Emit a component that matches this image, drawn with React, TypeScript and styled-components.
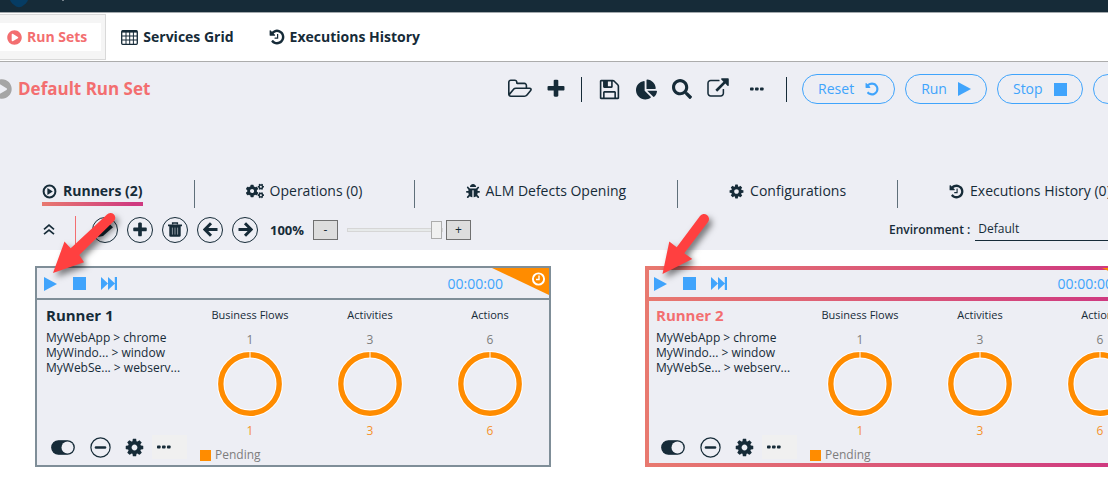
import React from "react";
import styled, { createGlobalStyle, css } from "styled-components";
import { FaBug, FaChartPie, FaCogs, FaPlayCircle, FaSearch } from "react-icons/fa";

const ink = "#162b38";
const blue = "#40a4fc";
const coral = "#f36e70";
const orange = "#ff8c00";
const panel = "#edeef4";
const sunset = "linear-gradient(90deg, #e8796f 0%, #cf3a80 90%)";

const GlobalStyle = createGlobalStyle`
  * { box-sizing: border-box; }
  body {
    margin: 0;
    background: #fff;
    color: ${ink};
    font: 14px/20px "Open Sans", "Noto Sans", sans-serif;
    overflow: hidden;
  }
  button, select, input { font: inherit; color: inherit; margin: 0; }
  svg { display: block; flex: none; }
`;

/* ---------- icons ---------- */

const glyphs = {
  undo: "M1664 896q0 156-61 298t-164 245-245 164-298 61q-172 0-327-72.5t-264-204.5q-7-10-6.5-22.5t8.5-20.5l137-138q10-9 25-9 16 2 23 12 73 95 179 147t225 52q104 0 198.5-40.5t163.5-109.5 109.5-163.5 40.5-198.5-40.5-198.5-109.5-163.5-163.5-109.5-198.5-40.5q-98 0-188 35.5t-160 101.5l137 138q31 30 14 69-17 40-59 40h-448q-26 0-45-19t-19-45v-448q0-42 40-59 39-17 69 14l130 129q107-101 244.5-156.5t284.5-55.5q156 0 298 61t245 164 164 245 61 298z",
  hands: "M1024 608v448q0 14-9 23t-23 9h-320q-14 0-23-9t-9-23v-64q0-14 9-23t23-9h224v-352q0-14 9-23t23-9h64q14 0 23 9t9 23z",
  external: "M1408 928v320q0 119-84.5 203.5t-203.5 84.5h-832q-119 0-203.5-84.5t-84.5-203.5v-832q0-119 84.5-203.5t203.5-84.5h704q14 0 23 9t9 23v64q0 14-9 23t-23 9h-704q-66 0-113 47t-47 113v832q0 66 47 113t113 47h832q66 0 113-47t47-113v-320q0-14 9-23t23-9h64q14 0 23 9t9 23zm384-864v512q0 26-19 45t-45 19-45-19l-176-176-652 652q-10 10-23 10t-23-10l-114-114q-10-10-10-23t10-23l652-652-176-176q-19-19-19-45t19-45 45-19h512q26 0 45 19t19 45z",
  plus: "M1600 736v192q0 40-28 68t-68 28h-416v416q0 40-28 68t-68 28h-192q-40 0-68-28t-28-68v-416h-416q-40 0-68-28t-28-68v-192q0-40 28-68t68-28h416v-416q0-40 28-68t68-28h192q40 0 68 28t28 68v416h416q40 0 68 28t28 68z",
  floppy: "M512 1536h768v-384h-768v384zm896 0h128v-896q0-14-10-38.5t-20-34.5l-281-281q-10-10-34-20t-39-10v416q0 40-28 68t-68 28h-576q-40 0-68-28t-28-68v-416h-128v1280h128v-416q0-40 28-68t68-28h832q40 0 68 28t28 68v416zm-384-928v-320q0-13-9.5-22.5t-22.5-9.5h-192q-13 0-22.5 9.5t-9.5 22.5v320q0 13 9.5 22.5t22.5 9.5h192q13 0 22.5-9.5t9.5-22.5zm640 32v928q0 40-28 68t-68 28h-1344q-40 0-68-28t-28-68v-1344q0-40 28-68t68-28h928q40 0 88 20t76 48l280 280q28 28 48 76t20 88z",
  folder: "M1717 931q0-35-53-35h-1088q-40 0-85.5 21.5t-71.5 52.5l-294 363q-18 24-18 40 0 35 53 35h1088q40 0 86-22t71-53l294-363q18-22 18-39zm-1141-163h768v-160q0-40-28-68t-68-28h-576q-40 0-68-28t-28-68v-64q0-40-28-68t-68-28h-320q-40 0-68 28t-28 68v853l256-315q44-53 116-87.5t140-34.5zm1269 163q0 62-46 120l-295 363q-43 53-116 87.5t-140 34.5h-1088q-92 0-158-66t-66-158v-960q0-92 66-158t158-66h320q92 0 158 66t66 158v32h544q92 0 158 66t66 158v160h192q54 0 99 24.5t67 70.5q15 32 15 68z",
  cog: "M1152 896q0-106-75-181t-181-75-181 75-75 181 75 181 181 75 181-75 75-181zm512-109v222q0 12-8 23t-20 13l-185 28q-19 54-39 91 35 50 107 138 10 12 10 25t-9 23q-27 37-99 108t-94 71q-12 0-26-9l-138-108q-44 23-91 38-16 136-29 186-7 28-36 28h-222q-14 0-24.5-8.5t-11.5-21.5l-28-184q-49-16-90-37l-141 107q-10 9-25 9-14 0-25-11-126-114-165-168-7-10-7-23 0-12 8-23 15-21 51-66.5t54-70.5q-27-50-41-99l-183-27q-13-2-21-12.5t-8-23.5v-222q0-12 8-23t19-13l186-28q14-46 39-92-40-57-107-138-10-12-10-24 0-10 9-23 26-36 98.5-107.5t94.5-71.5q13 0 26 10l138 107q44-23 91-38 16-136 29-186 7-28 36-28h222q14 0 24.5 8.5t11.5 21.5l28 184q49 16 90 37l142-107q9-9 24-9 13 0 25 10 129 119 165 170 7 8 7 22 0 12-8 23-15 21-51 66.5t-54 70.5q26 50 41 98l183 28q13 2 21 12.5t8 23.5z",
};

const Glyph = ({ name, size }: { name: keyof typeof glyphs | "history"; size: number }) => (
  <svg width={size} height={size} viewBox={name === "folder" ? "-64 0 1920 1792" : "64 64 1664 1664"} fill="currentColor" overflow="visible">
    {name === "history" ? (
      <>
        <path d={glyphs.undo} />
        <path d={glyphs.hands} />
      </>
    ) : (
      <path d={glyphs[name]} />
    )}
  </svg>
);

const TableIcon = () => (
  <svg width="17" height="15" viewBox="0 0 17 15" fill="none" stroke="currentColor">
    <rect x="0.7" y="0.7" width="15.6" height="13.6" rx="1" strokeWidth="1.3" />
    <path d="M1 1.6h15" strokeWidth="2" />
    <path d="M1 6h15M1 10h15M5 2v12M8.7 2v12M12.4 2v12" strokeWidth="1" />
  </svg>
);
const PlayRing = () => (
  <svg width="15" height="15" viewBox="0 0 15 15">
    <circle cx="7.5" cy="7.5" r="5.9" fill="none" stroke="currentColor" strokeWidth="2" />
    <path d="M5.4 4.1l5.4 3.4-5.4 3.4z" fill="currentColor" />
  </svg>
);
const Dots = () => (
  <svg width="14" height="4" viewBox="0 0 14 4" fill="currentColor">
    <rect y="0.5" width="3.6" height="3" rx="0.8" />
    <rect x="5" y="0.5" width="3.6" height="3" rx="0.8" />
    <rect x="10" y="0.5" width="3.6" height="3" rx="0.8" />
  </svg>
);
const PlayIcon = () => (
  <svg width="13" height="14" viewBox="0 0 13 14" fill="currentColor"><path d="M0 0l13 7L0 14z" /></svg>
);
const StopIcon = () => (
  <svg width="13" height="13" viewBox="0 0 13 13" fill="currentColor"><path d="M0 0h13v13H0z" /></svg>
);
const ForwardIcon = () => (
  <svg width="16" height="13" viewBox="0 0 16 13" fill="currentColor">
    <path d="M0 0l7 6.5L0 13zM7 0l7 6.5L7 13zM13.8 0H16v13h-2.2z" />
  </svg>
);
const ChevronsUp = () => (
  <svg width="12" height="11" viewBox="0 0 12 11" fill="none" stroke="currentColor" strokeWidth="1.7">
    <path d="M1 5.4l5-4.2 5 4.2M1 10.2L6 6l5 4.2" />
  </svg>
);
const PencilIcon = () => (
  <svg width="18" height="18" viewBox="0 0 18 18" fill="currentColor">
    <path d="M2 16l1-5L12.600 2 17 6.200 7 15z" />
  </svg>
);
const TrashIcon = () => (
  <svg width="14" height="15" viewBox="0 0 14 15">
    <path d="M4.6 2.6V1h4.8v1.6" fill="none" stroke="currentColor" strokeWidth="1.4" />
    <path d="M0 2.4h14v1.8H0zM1.3 4h11.4v9.4q0 1.4-1.4 1.4H2.7q-1.4 0-1.4-1.4z" fill="currentColor" />
    <path d="M4.4 5.6v7M7 5.6v7M9.6 5.6v7" stroke="#9aa3ab" strokeWidth="0.9" />
  </svg>
);
const ArrowIcon = ({ flip }: { flip?: boolean }) => (
  <svg width="15" height="15" viewBox="0 0 15 15" fill="none" stroke="currentColor" strokeWidth="3">
    <path d={flip ? "M0.5 7.5h12.5M7 1.3l6.2 6.2L7 13.7" : "M14.5 7.5H2M8 1.3L1.8 7.5 8 13.7"} />
  </svg>
);
const ToggleIcon = () => (
  <svg width="24" height="15" viewBox="0 0 24 15">
    <rect x="0.8" y="0.8" width="22.4" height="13.4" rx="6.7" fill="currentColor" stroke="currentColor" strokeWidth="1.3" />
    <circle cx="16.5" cy="7.5" r="6" fill={panel} />
  </svg>
);
const MinusRing = () => (
  <svg width="21" height="21" viewBox="0 0 21 21" stroke="currentColor" fill="none">
    <circle cx="10.5" cy="10.5" r="9.6" strokeWidth="1.2" />
    <path d="M6 10.5h9" strokeWidth="2.6" strokeLinecap="round" />
  </svg>
);
const PendingCorner = () => (
  <svg width="57" height="27" viewBox="0 0 57 27">
    <path d="M0 0h57v27z" fill={orange} />
    <circle cx="46.5" cy="11" r="5.6" fill="none" stroke="#fff" strokeWidth="1.9" />
    <path d="M47 7.5v4h-3" fill="none" stroke="#fff" strokeWidth="1.4" />
  </svg>
);
const Ring = () => (
  <svg width="66" height="66" viewBox="0 0 66 66" fill="none">
    <circle cx="33" cy="33" r="29.2" stroke="#fff" strokeWidth="7.4" />
    <circle cx="33" cy="33" r="29.2" stroke={orange} strokeWidth="5.4" />
    <path d="M33 0.5v6.500" stroke="#fff" />
  </svg>
);

/* ---------- top navigation ---------- */

const TitleBar = styled.div`
  height: 13px;
  padding-left: 10px;
  display: flex;
  background: ${ink};
  border-bottom: 1px solid #a3a9ad;
`;
const Nav = styled.nav`
  display: flex;
  align-items: center;
  height: 49px;
  border-bottom: 1px solid #acacac;
  background: #fff;
`;
const NavLink = styled.a<{ $active?: boolean }>`
  display: flex;
  align-items: center;
  gap: 5px;
  color: ${ink};
  font-size: 14px;
  font-weight: 700;
  text-decoration: none;
  white-space: nowrap;
  margin-left: ${(p) => (p.$active ? 0 : 35)}px;
  ${(p) =>
    p.$active &&
    css`
      color: ${coral};
      height: 28px;
      padding: 0 14px 0 7px;
      background: #fff;
    `}
`;
const ActiveTab = styled.div`
  display: flex;
  align-items: center;
  height: 46px;
  padding-right: 4px;
  margin-right: -20px;
  background: #f5f5f5;
  border: 1px solid #d9d9d9;
  border-left: 0;
`;

/* ---------- run set header ---------- */

const RunSetPanel = styled.section`
  background: ${panel};
  overflow: hidden;
`;
const HeaderRow = styled.header`
  display: flex;
  align-items: center;
  height: 54px;
  margin: 0 -76px 64px -8px;
`;
const Title = styled.h1`
  flex: 1;
  display: flex;
  align-items: center;
  gap: 6px;
  margin: 0;
  color: ${coral};
  font-size: 17px;
  font-weight: 700;
  white-space: nowrap;
  svg { color: #a5a5a5; }
`;
const Tools = styled.div`
  display: flex;
  align-items: center;
  gap: 15px;
`;
const Separator = styled.span<{ $color?: string; $height: number }>`
  flex: none;
  width: 1px;
  height: ${(p) => p.$height}px;
  background: ${(p) => p.$color ?? ink};
`;
const IconButton = styled.button<{ $width?: number; $color?: string }>`
  flex: none;
  display: flex;
  align-items: center;
  justify-content: center;
  width: ${(p) => p.$width ?? 22}px;
  height: 24px;
  padding: 0;
  border: 0;
  background: none;
  color: ${(p) => p.$color ?? ink};
`;
const PillButton = styled.button`
  display: flex;
  align-items: center;
  gap: 11px;
  height: 30px;
  padding: 0 15px;
  border: 1px solid ${blue};
  border-radius: 15px;
  background: none;
  color: ${blue};
  white-space: nowrap;
`;
const Pills = styled.div`
  display: flex;
  gap: 10px;
`;

/* ---------- section tabs ---------- */

const Tabs = styled.nav`
  display: flex;
  align-items: center;
  height: 28px;
`;
const TabCell = styled.div`
  flex: none;
  display: flex;
  justify-content: center;
  padding: 0 51px;
  height: 28px;
  &:first-child { padding-left: 42px; }
  & + & { border-left: 1px solid #5f6f7a; }
`;
const Tab = styled.a<{ $active?: boolean }>`
  display: flex;
  align-items: center;
  gap: 6px;
  height: 26px;
  color: ${ink};
  text-decoration: none;
  white-space: nowrap;
  font-weight: ${(p) => (p.$active ? 700 : 400)};
  border-bottom: 4px solid transparent;
  border-image: ${(p) => (p.$active ? `${sunset} 1` : "none")};
`;

/* ---------- runner tool strip ---------- */

const Strip = styled.div`
  display: flex;
  align-items: center;
  height: 42px;
  padding: 6px 0 5px 38px;
`;
const StripRule = styled(Separator)`
  margin-left: 15px;
`;
const RoundGroup = styled.div`
  display: flex;
  gap: 9px;
  margin: 0 12px 0 16px;
`;
const RoundButton = styled.button`
  display: flex;
  align-items: center;
  justify-content: center;
  width: 26px;
  height: 26px;
  padding: 0;
  border: 1px solid ${ink};
  border-radius: 50%;
  background: none;
`;
const ZoomValue = styled.output`
  width: 43px;
  font-size: 13px;
  font-weight: 700;
`;
const StepButton = styled.button`
  width: 25px;
  height: 20px;
  padding: 0;
  border: 1px solid #707070;
  background: #dddddd;
  font-size: 12px;
  line-height: 16px;
`;
const ZoomSlider = styled.input`
  appearance: none;
  width: 96px;
  height: 18px;
  margin: 0 3px 0 9px;
  background: none;
  &::-webkit-slider-runnable-track {
    height: 4px;
    border: 1px solid #d6d6d6;
    background: #e7eaea;
  }
  &::-webkit-slider-thumb {
    appearance: none;
    width: 11px;
    height: 18px;
    margin-top: -8px;
    border: 1px solid #acacac;
    background: #f0f0f0;
  }
`;
const Environment = styled.div`
  display: flex;
  align-items: center;
  gap: 5px;
  width: 219px;
  margin-left: auto;
  font-size: 12px;
  label { flex: none; font-weight: 600; }
`;
const EnvironmentSelect = styled.select`
  flex: 1;
  appearance: none;
  height: 22px;
  padding: 0 3px;
  border: 0;
  border-bottom: 1px solid ${ink};
  border-radius: 0;
  background: none;
`;

/* ---------- runner cards ---------- */

const RunnerList = styled.main`
  display: flex;
  gap: 94px;
  padding: 16px 0 14px 35px;
  overflow: hidden;
`;
const Card = styled.article<{ $active?: boolean }>`
  position: relative;
  flex: none;
  width: 516px;
  border: 2px solid #7f8e98;
  padding: 2px;
  background: ${panel};
  ${(p) =>
    p.$active &&
    css`
      border: 4px solid transparent;
      padding: 0;
      background: linear-gradient(${panel}, ${panel}) padding-box, ${sunset} border-box;
    `}
`;
const CardBar = styled.div`
  display: flex;
  align-items: center;
  height: 27px;
  padding: 0 44px 0 5px;
  color: ${blue};
`;
const Timer = styled.time`
  margin-left: auto;
`;
const CardRule = styled.div<{ $active?: boolean }>`
  height: 4px;
  margin: 0 -2px;
  background: ${(p) => (p.$active ? sunset : "#7f8e98")};
  border: solid ${panel};
  border-width: ${(p) => (p.$active ? 0 : "1px 0")};
`;
const Corner = styled.div<{ $inset: number }>`
  position: absolute;
  top: ${(p) => p.$inset}px;
  right: ${(p) => p.$inset}px;
`;
const CardBody = styled.div`
  display: grid;
  grid-template-columns: minmax(0, 1fr) 360px;
  height: 162px;
  margin-right: -3px;
  padding-top: 4px;
`;
const Summary = styled.div`
  display: flex;
  flex-direction: column;
  padding-left: 7px;
`;
const RunnerName = styled.h2<{ $active?: boolean }>`
  margin: 0 0 5px;
  font-size: 15px;
  line-height: 20px;
  font-weight: 700;
  color: ${(p) => (p.$active ? coral : ink)};
`;
const Targets = styled.ul`
  margin: 0;
  padding: 0;
  list-style: none;
  font-size: 12px;
  line-height: 15px;
  white-space: nowrap;
`;
const CardActions = styled.div`
  display: flex;
  align-items: center;
  gap: 12px;
  margin-top: auto;
  padding: 0 0 6px 3px;
`;
const MoreButton = styled(IconButton)`
  justify-content: flex-start;
  margin-left: -5px;
  padding-left: 5px;
  background: #f0f0f0;
`;
const Charts = styled.div`
  display: grid;
  grid-template-columns: repeat(3, 1fr);
  align-content: start;
`;
const Chart = styled.figure`
  margin: 0;
  display: flex;
  flex-direction: column;
  align-items: center;
  font-size: 12px;
  line-height: 20px;
`;
const ChartName = styled.figcaption`
  margin-bottom: 5px;
  font-size: 11px;
`;
const Count = styled.span<{ $total?: boolean }>`
  color: ${(p) => (p.$total ? "#7d7d7d" : "#f5922b")};
  line-height: ${(p) => (p.$total ? 20 : 28)}px;
  padding-bottom: ${(p) => (p.$total ? 1 : 0)}px;
`;
const Legend = styled.div`
  display: flex;
  align-items: center;
  gap: 4px;
  margin-left: 10px;
  font-size: 12px;
  color: #7d7d7d;
`;
const Swatch = styled.span`
  width: 11px;
  height: 11px;
  background: ${orange};
`;
const Markers = styled.svg`
  position: absolute;
  left: 0;
  top: 200px;
  pointer-events: none;
  filter: drop-shadow(3px 4px 3px rgba(0, 0, 0, 0.5));
`;

const stats: [string, number][] = [["Business Flows", 1], ["Activities", 3], ["Actions", 6]];
const targets = ["MyWebApp > chrome", "MyWindo... > window", "MyWebSe... > webserv..."];

const Runner = ({ name, active }: { name: string; active?: boolean }) => (
  <Card $active={active}>
    <CardBar>
      <IconButton $color={blue} $width={13} aria-label="Run"><PlayIcon /></IconButton>
      <IconButton $color={blue} $width={44} aria-label="Stop"><StopIcon /></IconButton>
      <IconButton $color={blue} $width={16} aria-label="Continue"><ForwardIcon /></IconButton>
      <Timer>00:00:00</Timer>
    </CardBar>
    <CardRule $active={active} />
    <Corner $inset={active ? -2 : 0}><PendingCorner /></Corner>
    <CardBody>
      <Summary>
        <RunnerName $active={active}>{name}</RunnerName>
        <Targets>{targets.map((t) => <li key={t}>{t}</li>)}</Targets>
        <CardActions>
          <IconButton $width={28} aria-label="Active"><ToggleIcon /></IconButton>
          <IconButton aria-label="Collapse"><MinusRing /></IconButton>
          <IconButton aria-label="Configure"><Glyph name="cog" size={19} /></IconButton>
          <MoreButton $width={35} aria-label="More"><Dots /></MoreButton>
        </CardActions>
      </Summary>
      <Charts>
        {stats.map(([label, count]) => (
          <Chart key={label}>
            <ChartName>{label}</ChartName>
            <Count $total>{count}</Count>
            <Ring />
            <Count>{count}</Count>
          </Chart>
        ))}
        <Legend><Swatch />Pending</Legend>
      </Charts>
    </CardBody>
  </Card>
);

export default function App() {
  return (
    <>
      <GlobalStyle />
      <TitleBar>
        <svg width="56" height="12" viewBox="0 0 56 12">
          <path d="M0 0h18q-1 3-6 6.5-3 1.5-6 0Q1 3 0 0z" fill="#063c63" />
          <path d="M53 0v1" stroke="#d5dade" />
        </svg>
      </TitleBar>
      <Nav>
        <ActiveTab>
          <NavLink $active href="#run-sets"><FaPlayCircle size={15} />Run Sets</NavLink>
        </ActiveTab>
        <NavLink href="#grid"><TableIcon />Services Grid</NavLink>
        <NavLink href="#history"><Glyph name="history" size={16} />Executions History</NavLink>
      </Nav>
      <RunSetPanel>
        <HeaderRow>
          <Title><FaPlayCircle size={20} />Default Run Set</Title>
          <Tools>
            <IconButton $width={23} aria-label="Open"><Glyph name="folder" size={24} /></IconButton>
            <IconButton $width={20} aria-label="Add"><Glyph name="plus" size={20} /></IconButton>
            <Separator $height={25} />
            <IconButton $width={24} aria-label="Save"><Glyph name="floppy" size={21} /></IconButton>
            <IconButton $width={20} aria-label="Report"><FaChartPie size={21} /></IconButton>
            <IconButton aria-label="Search"><FaSearch size={20} /></IconButton>
            <IconButton $width={20} aria-label="Export"><Glyph name="external" size={20} /></IconButton>
            <IconButton $width={28} aria-label="More"><Dots /></IconButton>
            <Separator $height={25} />
            <Pills>
              <PillButton>Reset<Glyph name="undo" size={14} /></PillButton>
              <PillButton>Run<PlayIcon /></PillButton>
              <PillButton>Stop<StopIcon /></PillButton>
              <PillButton>Continue</PillButton>
            </Pills>
          </Tools>
        </HeaderRow>
        <Tabs>
          <TabCell><Tab $active href="#runners"><PlayRing />Runners (2)</Tab></TabCell>
          <TabCell><Tab href="#operations"><FaCogs size={18} />Operations (0)</Tab></TabCell>
          <TabCell><Tab href="#alm"><FaBug size={14} />ALM Defects Opening</Tab></TabCell>
          <TabCell><Tab href="#config"><Glyph name="cog" size={15} />Configurations</Tab></TabCell>
          <TabCell><Tab href="#executions"><Glyph name="history" size={15} />Executions History (0)</Tab></TabCell>
        </Tabs>
        <Strip>
          <IconButton aria-label="Collapse all"><ChevronsUp /></IconButton>
          <StripRule $height={28} $color={coral} />
          <RoundGroup>
            <RoundButton aria-label="Edit"><PencilIcon /></RoundButton>
            <RoundButton aria-label="Add runner"><Glyph name="plus" size={16} /></RoundButton>
            <RoundButton aria-label="Delete"><TrashIcon /></RoundButton>
            <RoundButton aria-label="Move left"><ArrowIcon /></RoundButton>
            <RoundButton aria-label="Move right"><ArrowIcon flip /></RoundButton>
          </RoundGroup>
          <ZoomValue>100%</ZoomValue>
          <StepButton aria-label="Zoom out">-</StepButton>
          <ZoomSlider type="range" aria-label="Zoom" defaultValue={100} />
          <StepButton aria-label="Zoom in">+</StepButton>
          <Environment>
            <label htmlFor="environment">Environment :</label>
            <EnvironmentSelect id="environment"><option>Default</option></EnvironmentSelect>
          </Environment>
        </Strip>
      </RunSetPanel>
      <RunnerList>
        <Runner name="Runner 1" />
        <Runner name="Runner 2" active />
      </RunnerList>
      <Markers width="730" height="90" viewBox="0 200 730 90" fill="#ff4040">
        <path d="M53 273L64.5 241.5 70.7 248.3 107 214.5A4.7 4.7 0 0 1 114 221L79.3 255 84 262.3z" />
        <path d="M662.5 274L669.3 241.5 676.7 247.3 700 216A4.8 4.8 0 0 1 708 222L684.3 253.3 692.3 259z" />
      </Markers>
    </>
  );
}
